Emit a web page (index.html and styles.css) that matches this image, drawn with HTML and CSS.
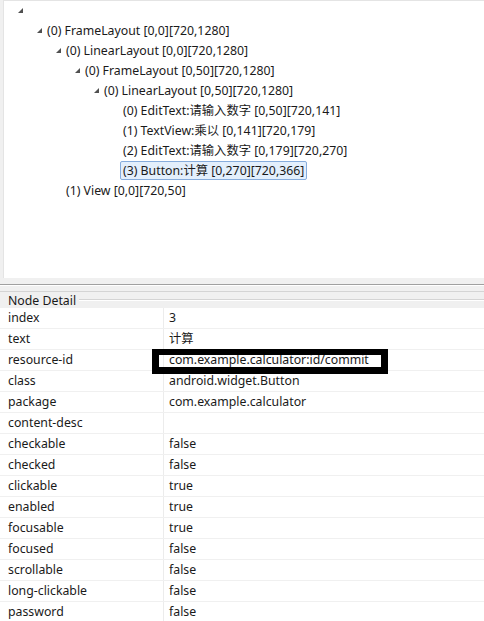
FILE: index.html
```html
<!DOCTYPE html>
<html lang="en">
<head>
  <meta charset="UTF-8">
  <meta name="viewport" content="width=device-width, initial-scale=1.0">
  <title>UI Automator Viewer</title>
  <link rel="stylesheet" href="styles.css">
</head>
<body>
  <div class="tree">
    <div class="node lvl0"><span class="twisty open"></span></div>
    <div class="node lvl1"><span class="twisty open"></span><span class="label">(0) FrameLayout [0,0][720,1280]</span></div>
    <div class="node lvl2"><span class="twisty open"></span><span class="label">(0) LinearLayout [0,0][720,1280]</span></div>
    <div class="node lvl3"><span class="twisty open"></span><span class="label">(0) FrameLayout [0,50][720,1280]</span></div>
    <div class="node lvl4"><span class="twisty open"></span><span class="label">(0) LinearLayout [0,50][720,1280]</span></div>
    <div class="node lvl5"><span class="twisty"></span><span class="label">(0) EditText:请输入数字 [0,50][720,141]</span></div>
    <div class="node lvl5"><span class="twisty"></span><span class="label">(1) TextView:乘以 [0,141][720,179]</span></div>
    <div class="node lvl5"><span class="twisty"></span><span class="label">(2) EditText:请输入数字 [0,179][720,270]</span></div>
    <div class="node lvl5"><span class="twisty"></span><span class="label selected">(3) Button:计算 [0,270][720,366]</span></div>
    <div class="node lvl2"><span class="twisty"></span><span class="label">(1) View [0,0][720,50]</span></div>
  </div>

  <div class="sash"></div>

  <div class="detail-title"><span>Node Detail</span></div>

  <div class="detail">
    <div class="row"><div class="key">index</div><div class="val">3</div></div>
    <div class="row"><div class="key">text</div><div class="val">计算</div></div>
    <div class="row"><div class="key">resource-id</div><div class="val"><span class="redact"></span>com.example.calculator:id/commit</div></div>
    <div class="row"><div class="key">class</div><div class="val">android.widget.Button</div></div>
    <div class="row"><div class="key">package</div><div class="val">com.example.calculator</div></div>
    <div class="row"><div class="key">content-desc</div><div class="val"></div></div>
    <div class="row"><div class="key">checkable</div><div class="val">false</div></div>
    <div class="row"><div class="key">checked</div><div class="val">false</div></div>
    <div class="row"><div class="key">clickable</div><div class="val">true</div></div>
    <div class="row"><div class="key">enabled</div><div class="val">true</div></div>
    <div class="row"><div class="key">focusable</div><div class="val">true</div></div>
    <div class="row"><div class="key">focused</div><div class="val">false</div></div>
    <div class="row"><div class="key">scrollable</div><div class="val">false</div></div>
    <div class="row"><div class="key">long-clickable</div><div class="val">false</div></div>
    <div class="row"><div class="key">password</div><div class="val">false</div></div>
  </div>
</body>
</html>
```

FILE: styles.css
```css
body { margin: 0; background: #f0f0f0; font-family: "Noto Sans", "Noto Sans CJK SC", sans-serif; font-size: 12.3px; color: #1a1a1a; overflow: hidden; }

.tree { height: 277px; margin-left: 3px; background: #fff; border-left: 1px solid #e4e4e4; border-top: 1px solid #e4e4e4; }
.node { height: 20px; display: flex; align-items: center; white-space: nowrap; }
.node:first-child { margin-top: -1px; }
.lvl0 { padding-left: 10px; }
.lvl1 { padding-left: 29px; }
.lvl2 { padding-left: 48px; }
.lvl3 { padding-left: 67px; }
.lvl4 { padding-left: 86px; }
.lvl5 { padding-left: 105px; }
.twisty { width: 14px; height: 20px; flex: none; position: relative; }
.twisty.open::before { content: ""; position: absolute; left: 4px; top: 8px; width: 0; height: 0; border-left: 5px solid transparent; border-bottom: 5px solid #505050; }
.label { padding: 0 2px; line-height: 17px; border: 1px solid transparent; margin-left: -3px; }
.label.selected { background: #e3effc; border-color: #86acdc; border-radius: 2px; }

.sash { height: 14px; background: linear-gradient(to bottom, #f0f0f0 0 6px, #a0a0a0 6px 7px, #fff 7px 8px, #f0f0f0 8px 13px, #d4d4d4 13px 14px); }

.detail-title { height: 16px; display: flex; align-items: center; padding-left: 8px; }
.detail-title::after { content: ""; flex: 1; margin-left: 3px; border-top: 1px solid #d4d4d4; border-bottom: 1px solid #fff; }

.detail { background: #fff; }
.row { height: 20px; display: flex; border-bottom: 1px solid #f0f0f0; }
.key { width: 155px; padding-left: 8px; line-height: 20px; border-right: 1px solid #ececec; flex: none; }
.val { padding-left: 5px; line-height: 20px; position: relative; }
.redact { position: absolute; left: -12px; top: -1px; width: 222px; height: 12px; border: solid #000; border-width: 6px 7px 7px 7px; }
```
